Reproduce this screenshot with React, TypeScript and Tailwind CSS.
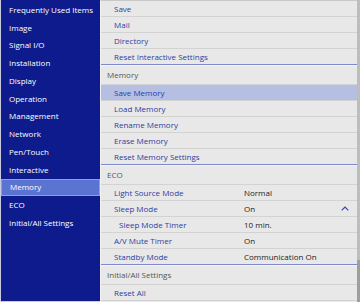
const sidebar = [
  "Frequently Used Items",
  "Image",
  "Signal I/O",
  "Installation",
  "Display",
  "Operation",
  "Management",
  "Network",
  "Pen/Touch",
  "Interactive",
  "Memory",
  "ECO",
  "Initial/All Settings",
];

type Item = { label: string; value?: string; indent?: boolean; active?: boolean; open?: boolean };

const groups: { title?: string; items: Item[] }[] = [
  {
    items: [
      { label: "Save" },
      { label: "Mail" },
      { label: "Directory" },
      { label: "Reset Interactive Settings" },
    ],
  },
  {
    title: "Memory",
    items: [
      { label: "Save Memory", active: true },
      { label: "Load Memory" },
      { label: "Rename Memory" },
      { label: "Erase Memory" },
      { label: "Reset Memory Settings" },
    ],
  },
  {
    title: "ECO",
    items: [
      { label: "Light Source Mode", value: "Normal" },
      { label: "Sleep Mode", value: "On", open: true },
      { label: "Sleep Mode Timer", value: "10 min.", indent: true },
      { label: "A/V Mute Timer", value: "On" },
      { label: "Standby Mode", value: "Communication On" },
    ],
  },
  {
    title: "Initial/All Settings",
    items: [{ label: "Reset All" }, { label: "" }],
  },
];

function Row({ item, last }: { item: Item; last: boolean }) {
  return (
    <div
      className={`flex h-4 shrink-0 items-center border-b ${
        last ? "border-[#7f88cc]" : "border-[#d3d3d3]"
      } ${item.active ? "bg-[#b4bfe3]" : "bg-[#e8e8e8]"}`}
    >
      <div
        className={`${item.indent ? "pl-[18px]" : "pl-[13px]"} w-[143px] shrink-0 font-medium text-[#2d3da3]`}
      >
        {item.label}
      </div>
      {item.value && <div className="flex-1 font-medium text-[#1a1a1a]">{item.value}</div>}
      {item.open && (
        <svg width="8" height="5" viewBox="0 0 8 5" className="mr-[8px]">
          <path d="M0.7 4.3 L4 1 L7.3 4.3" fill="none" stroke="#3445ad" strokeWidth="1.2" />
        </svg>
      )}
    </div>
  );
}

export default function App() {
  return (
    <div
      className="flex h-[302px] w-[360px] overflow-hidden bg-[#e8e8e8] text-[8px] leading-none"
      style={{ fontFamily: '"Open Sans", "Noto Sans", sans-serif' }}
    >
      {/* menú principal */}
      <div className="flex w-[100px] shrink-0 flex-col border-b border-l border-[#c9cbe0] bg-[#0e1b8c] pt-[1px]">
        {sidebar.map((s) => (
          <div
            key={s}
            className={`flex h-[17.75px] shrink-0 items-center pl-[8px] font-medium text-white ${
              s === "Memory" ? "border border-[#8a9de6] bg-[#5b74d2] pl-[7px]" : ""
            }`}
          >
            {s}
          </div>
        ))}
      </div>

      {/* submenú */}
      <div className="flex flex-1 flex-col border-l border-[#f2f2f2] border-t border-t-[#c8c8c8]">
        {groups.map((g, gi) => (
          <div key={gi} className="flex flex-col">
            {g.title && (
              <div className="flex h-5 shrink-0 items-center border-b border-t border-b-[#d3d3d3] border-t-[#f4f4f4] pl-[6px] text-[#555555]">
                {g.title}
              </div>
            )}
            {g.items.map((it, i) => (
              <Row key={i} item={it} last={i === g.items.length - 1 && gi < groups.length - 1} />
            ))}
          </div>
        ))}
      </div>

      {/* barra de desplazamiento */}
      <div className="flex w-[3px] shrink-0 flex-col bg-[#bdbdbd]">
        <div className="flex-1" />
        <div className="h-[42px] bg-[#9e9e9e]" />
      </div>
    </div>
  );
}
